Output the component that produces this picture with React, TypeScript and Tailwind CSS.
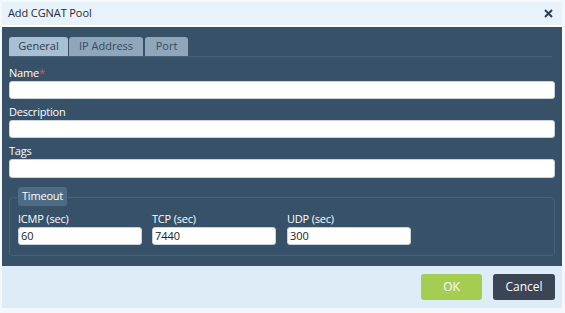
import React from "react";

function Input({ value = "", w }: { value?: string; w?: string }) {
  return (
    <div className={`h-[18px] rounded-[3px] bg-white border border-[#c9d3dc] flex items-center px-[2px] text-[11px] text-[#222] ${w ?? "w-full"}`}>
      {value}
    </div>
  );
}

export default function App() {
  return (
    <div className="w-[565px] h-[313px] bg-[#f4f8fb] pl-[2px] pr-[3px] pt-[2px]" style={{ fontFamily: '"Open Sans", "Noto Sans", sans-serif' }}>
      <div className="flex flex-col h-[306px]">
        <div className="h-[25px] bg-[#e8f2fa] flex items-center justify-between pl-[6px] pr-[9px] border-b-2 border-white">
          <span className="text-[11px] text-[#1d2b38] tracking-[-0.1px]">Add CGNAT Pool</span>
          <svg width="9" height="9" viewBox="0 0 9 9">
            <path d="M1 1L8 8M8 1L1 8" stroke="#2a3f55" strokeWidth="2" />
          </svg>
        </div>
        <div className="bg-[#375169] px-[7px] pt-[10px] h-[239px] flex flex-col">
          <div className="flex items-end gap-[1px] border-b border-[#4a6279] mr-[3px]">
            <div className="h-[19px] w-[59px] rounded-t-[3px] bg-[#a9bfd3] text-[11px] text-[#2c3e50] flex items-center justify-center">General</div>
            <div className="h-[19px] w-[74px] rounded-t-[3px] bg-[#8fa6bb] text-[11px] text-[#3a4d60] flex items-center justify-center">IP Address</div>
            <div className="h-[19px] w-[43px] ml-[1px] rounded-t-[3px] bg-[#8fa6bb] text-[11px] text-[#3a4d60] flex items-center justify-center">Port</div>
          </div>
          <div className="mt-[8px] text-[11px] text-white leading-[16px] tracking-[-0.2px]">
            Name<span className="text-[#e05060]">*</span>
          </div>
          <Input />
          <div className="mt-[5px] text-[11px] text-white leading-[16px] tracking-[-0.2px]">Description</div>
          <Input />
          <div className="mt-[5px] text-[11px] text-white leading-[16px] tracking-[-0.2px]">Tags</div>
          <div className="h-[19px] rounded-[3px] bg-white border border-[#c9d3dc]" />
          <div className="relative mt-[19px] border border-[#4a6279] rounded-[4px] h-[59px] px-[8px] pt-[13px]">
            <div className="absolute left-[8px] top-[-11px] h-[19px] px-[4px] rounded-[3px] bg-[#4e6b86] text-[11px] text-white flex items-center tracking-[-0.2px]">Timeout</div>
            <div className="flex gap-[10px]">
              <div className="w-[124px]">
                <div className="text-[11px] text-white leading-[16px] tracking-[-0.2px]">ICMP (sec)</div>
                <Input value="60" />
              </div>
              <div className="w-[124px]">
                <div className="text-[11px] text-white leading-[16px] tracking-[-0.2px]">TCP (sec)</div>
                <Input value="7440" />
              </div>
              <div className="w-[124px] ml-[1px]">
                <div className="text-[11px] text-white leading-[16px] tracking-[-0.2px]">UDP (sec)</div>
                <Input value="300" />
              </div>
            </div>
          </div>
        </div>
        <div className="flex-1 bg-[#ddecf7] flex items-center justify-end gap-[11px] pr-[7px]">
          <div className="w-[61px] h-[26px] rounded-[3px] bg-[#a5cd51] text-white text-[12px] flex items-center justify-center">OK</div>
          <div className="w-[62px] h-[26px] rounded-[3px] bg-[#3b4554] text-white text-[12px] flex items-center justify-center">Cancel</div>
        </div>
      </div>
    </div>
  );
}
